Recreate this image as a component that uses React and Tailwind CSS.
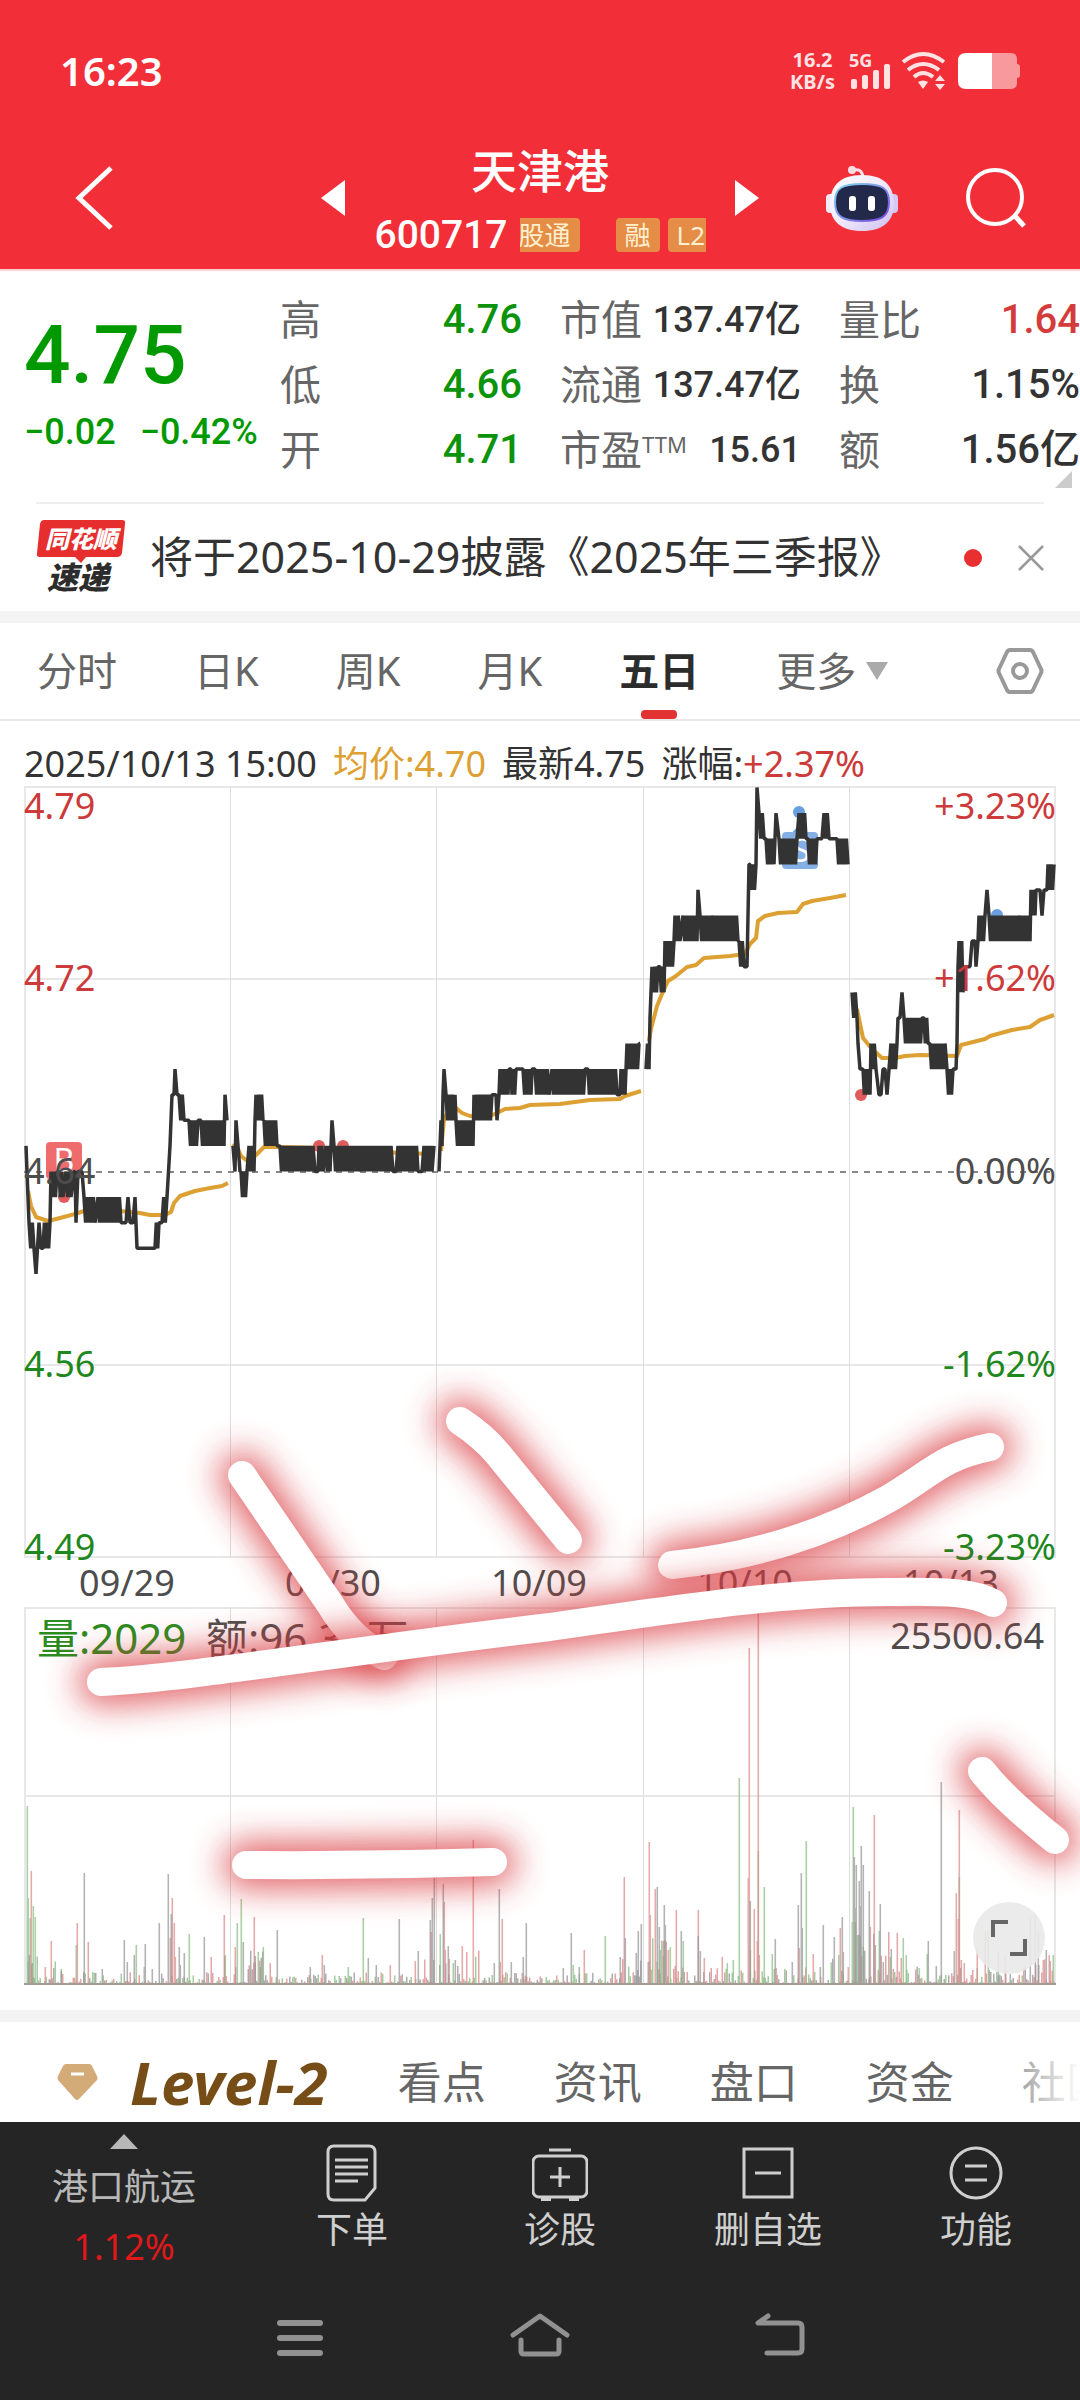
import React, { useState } from "react";

const sans = "font-['Noto_Sans','Noto_Sans_CJK_SC',sans-serif]";
const digits = "font-['Roboto','Noto_Sans_CJK_SC',sans-serif]";

const quotes = [
  [
    { label: "高", value: "4.76", color: "text-[#0c930c]" },
    { label: "低", value: "4.66", color: "text-[#0c930c]" },
    { label: "开", value: "4.71", color: "text-[#0c930c]" },
  ],
  [
    { label: "市值", value: "137.47亿", color: "text-[#333333]" },
    { label: "流通", value: "137.47亿", color: "text-[#333333]" },
    { label: "市盈", sup: "TTM", value: "15.61", color: "text-[#333333]" },
  ],
  [
    { label: "量比", value: "1.64", color: "text-[#d43c3c]" },
    { label: "换", value: "1.15%", color: "text-[#333333]" },
    { label: "额", value: "1.56亿", color: "text-[#333333]" },
  ],
];

const periods = ["分时", "日K", "周K", "月K", "五日"];
const infoTabs = ["看点", "资讯", "盘口", "资金", "社区"];

// One entry per run: [x start, x end, level a, level b], one level is 0.01
const days = [
  [
    [26, 28, 1, -1], [29, 34, -2, -3], [36, 36, -4, -4], [39, 41, -2, -3], [43, 50, -3, -2],
    [51, 57, 0, -1], [59, 63, 0, -1], [66, 71, 0, -1], [74, 75, 0, 0], [76, 76, -2, -2], [78, 82, 0, 0],
    [84, 95, -1, -2], [98, 108, -1, -2], [110, 121, -1, -2], [122, 126, -2, -2], [128, 128, -1, -1],
    [130, 133, -2, -2], [135, 135, -1, -1], [137, 154, -3, -3], [155, 159, -3, -2],
    [162, 167, -2, -1], [170, 170, 1, 1], [172, 174, 3, 3], [175, 175, 4, 4], [177, 178, 3, 3],
    [179, 184, 3, 2], [186, 188, 2, 2], [189, 198, 2, 1], [201, 224, 2, 1], [225, 225, 3, 3], [227, 227, 2, 2],
  ],
  [
    [233, 235, 1, 0], [236, 236, 2, 2], [238, 240, 1, 0], [241, 247, 0, -1], [249, 254, 1, 0],
    [255, 255, 2, 2], [256, 263, 3, 2], [264, 277, 2, 1], [280, 308, 1, 0], [310, 313, 1, 0],
    [315, 318, 0, 0], [319, 323, 1, 0], [326, 330, 1, 0], [332, 332, 2, 2], [334, 359, 1, 0],
    [361, 391, 1, 0], [393, 396, 0, 0], [398, 418, 1, 0], [419, 422, 0, 0], [424, 432, 1, 0], [434, 434, 1, 1],
  ],
  [
    [439, 441, 0, 2], [442, 443, 1, 3], [444, 444, 4, 4], [446, 455, 3, 2], [456, 473, 2, 1],
    [474, 492, 3, 2], [493, 496, 3, 3], [497, 499, 2, 3], [500, 508, 4, 3], [509, 511, 4, 4],
    [512, 516, 3, 4], [517, 522, 4, 4], [523, 531, 4, 3], [532, 534, 4, 4], [535, 549, 4, 3],
    [552, 562, 4, 3], [564, 585, 4, 3], [588, 598, 4, 3], [600, 617, 4, 3],
    [618, 620, 3, 3], [621, 625, 4, 3], [627, 639, 5, 4], [640, 640, 5, 5],
  ],
  [
    [646, 649, 4, 5], [650, 650, 6, 6], [652, 658, 8, 7], [660, 664, 8, 7], [665, 674, 9, 8],
    [675, 680, 10, 9], [683, 697, 10, 9], [698, 698, 11, 11], [700, 711, 10, 9], [713, 738, 10, 9],
    [739, 744, 9, 8], [745, 747, 8, 8],
    [749, 749, 12, 12], [750, 756, 12, 11], [757, 757, 15, 15], [759, 764, 14, 13], [766, 774, 13, 12],
    [776, 776, 14, 14], [779, 797, 13, 12], [799, 806, 14, 13], [808, 817, 13, 12], [818, 822, 13, 13],
    [824, 829, 14, 13], [831, 835, 13, 13], [837, 848, 13, 12],
  ],
  [
    [852, 857, 7, 6], [858, 858, 5, 5], [860, 861, 4, 4], [863, 870, 4, 3], [871, 876, 5, 4],
    [879, 881, 3, 3], [883, 885, 4, 4], [887, 889, 3, 4], [891, 897, 5, 4], [898, 900, 6, 6],
    [902, 902, 7, 7], [904, 922, 6, 5], [924, 928, 6, 5], [930, 945, 5, 4], [947, 953, 4, 3],
    [955, 956, 4, 4], [957, 958, 5, 8], [959, 963, 9, 7], [965, 970, 8, 8], [972, 975, 9, 9],
    [976, 978, 8, 9], [979, 985, 10, 9], [987, 987, 11, 11], [989, 1018, 10, 9], [1020, 1030, 10, 9],
    [1031, 1035, 11, 10],
    [1036, 1040, 11, 11], [1042, 1042, 10, 10], [1044, 1047, 11, 11], [1048, 1054, 12, 11],
  ],
];

const averages = [
  "28,1190 31,1205 36,1216 48,1220 60,1217 75,1213 84,1210 120,1210 140,1212 150,1214 165,1214 171,1211 174,1202 180,1195 195,1190 210,1187 222,1185 228,1182",
  "232,1144 238,1148 241,1155 246,1159 252,1158 258,1152 264,1146 280,1146 320,1147 360,1149 400,1152 434,1153",
  "441,1150 444,1118 450,1108 456,1107 462,1112 470,1115 490,1115 497,1112 505,1108 520,1107 530,1104 560,1103 590,1099 620,1098 625,1095 641,1090",
  "649,1040 651,1028 657,1005 662,993 668,980 676,975 687,966 696,964 704,957 730,955 745,953 750,943 756,937 758,920 765,915 778,912 797,911 803,903 812,900 830,897 846,894",
  "857,1008 863,1037 872,1048 882,1057 895,1057 905,1055 920,1054 957,1055 961,1044 985,1038 990,1035 1012,1029 1030,1026 1040,1019 1054,1014",
];

const volumes = {
  "#8fc08a": [
    [27, 179], [28, 87], [30, 67], [33, 79], [35, 68], [76, 40], [136, 40], [189, 51], [225, 30], [237, 62], [241, 86],
    [263, 38], [348, 18], [363, 67], [440, 51], [573, 20], [605, 49], [660, 35], [670, 38], [683, 44],
    [727, 22], [733, 25], [739, 207], [750, 35], [758, 134], [764, 98], [772, 31], [806, 144], [852, 63],
    [853, 178], [857, 50], [879, 54], [903, 47], [906, 30], [919, 17], [927, 31], [959, 108], [988, 54], [1053, 30],
  ],
  "#dc8f8f": [
    [31, 114], [45, 18], [51, 44], [77, 62], [88, 43], [170, 47], [172, 87], [174, 62], [175, 28], [224, 70], [235, 38], [254, 68],
    [322, 30], [390, 20], [415, 24], [431, 53], [444, 83], [445, 35], [449, 26], [462, 39], [473, 145], [500, 23], [502, 66],
    [584, 35], [624, 108], [649, 143], [650, 70], [655, 96], [663, 44], [668, 35], [676, 75], [698, 75],
    [704, 27], [722, 28], [748, 107], [749, 337], [754, 76], [757, 44], [758, 372], [759, 30], [776, 17],
    [799, 37], [813, 31], [840, 57], [848, 18], [855, 63], [870, 58], [874, 170], [897, 52], [901, 27],
    [956, 92], [958, 66], [959, 175], [961, 25], [964, 22], [977, 37], [985, 54], [1005, 28], [1043, 25], [1050, 24],
  ],
  "#9a9a9a": [
    [29, 30], [32, 22], [61, 14], [84, 112], [102, 16], [124, 45], [127, 23], [134, 30], [145, 41], [144, 18], [152, 16], [159, 62],
    [168, 111], [171, 71], [179, 38], [180, 20], [184, 32], [204, 48], [243, 43], [248, 16], [255, 29], [260, 18], [277, 55],
    [310, 18], [324, 20], [368, 27], [376, 20], [399, 66], [418, 34], [430, 65], [432, 87], [434, 107],
    [443, 101], [448, 39], [455, 25], [494, 22], [499, 96], [511, 23], [523, 28], [526, 62], [563, 17],
    [571, 52], [579, 18], [620, 28], [625, 47], [636, 32], [638, 54], [641, 61], [657, 98], [659, 58], [664, 80],
    [665, 60], [681, 54], [698, 49], [700, 34], [750, 84], [775, 46], [792, 23], [798, 80], [801, 112],
    [802, 57], [820, 18], [823, 60], [834, 48], [842, 68], [843, 33], [854, 128], [855, 77], [856, 120],
    [859, 104], [860, 79], [861, 139], [863, 120], [869, 94], [875, 40], [880, 81], [883, 23], [891, 36],
    [928, 44], [936, 19], [941, 203], [954, 34], [998, 33], [1030, 68], [1035, 70], [1038, 54], [1046, 35],
  ],
};

const strokes = [
  "M242 1474 L330 1603 Q352 1640 384 1655",
  "M460 1420 Q484 1436 497 1452 T568 1539",
  "M672 1564 Q790 1552 888 1498 C930 1474 940 1456 990 1446",
  "M101 1681 C190 1677 330 1652 550 1626 C700 1604 800 1590 895 1591 C950 1590 975 1592 993 1602",
  "M246 1864 Q370 1865 493 1861",
  "M982 1770 Q1004 1798 1055 1839",
];

const levelY = (level) => 1170.5 - level * 25.6;

const pricePath = (runs) => {
  const points = [];
  runs.forEach(([x0, x1, a, b]) => {
    const steps = Math.max(1, Math.round((x1 - x0) / 1.5));
    for (let i = 0; i <= steps; i++) {
      const x = x0 + ((x1 - x0) * i) / steps;
      points.push(`${x.toFixed(1)} ${levelY(i % 2 ? b : a).toFixed(1)}`);
    }
  });
  return "M" + points.join("L");
};

// Low background volume, higher after each open
const smallVolumes = () => {
  const colors = Object.keys(volumes);
  const opens = [26, 232, 439, 646, 852];
  const bars = [];
  let seed = 17;
  const next = () => {
    seed = (seed * 16807) % 2147483647;
    return seed / 2147483647;
  };
  opens.forEach((open, day) => {
    for (let x = open; x < open + 202; x += 1.5) {
      const t = (x - open) / 202;
      const boost = (t < 0.2 ? 22 : 7) * (day > 2 ? 1.5 : 1) + (t > 0.9 ? 10 : 0);
      const height = 2 + Math.pow(next(), 3) * boost * 1.6;
      bars.push([x, height, colors[Math.floor(next() * 3)]]);
    }
  });
  return bars;
};

const StatusBar = () => (
  <div className="flex h-[142px] items-center justify-between pl-[60px] pr-[59px] text-white">
    <span className="text-[40px] font-semibold">16:23</span>
    <div className="flex items-center gap-[10px]">
      <div className="mr-1 text-center text-[20px] font-bold leading-[22px] text-[#ffe3e4]">
        <p>16.2</p>
        <p>KB/s</p>
      </div>
      <svg width="42" height="44" viewBox="0 0 42 44" fill="#ffe3e4">
        <text x="0" y="18" fontSize="18" fontWeight="700">5G</text>
        <rect x="2" y="30" width="6" height="10" rx="2" />
        <rect x="13" y="26" width="6" height="14" rx="2" />
        <rect x="24" y="21" width="6" height="19" rx="2" />
        <rect x="35" y="15" width="6" height="25" rx="2" />
      </svg>
      <svg width="46" height="40" viewBox="0 0 46 40" fill="none" stroke="#ffe3e4" strokeWidth="4">
        <path d="M2 11 Q22 -5 43 11" />
        <path d="M7 19 Q22 7 38 19" />
        <path d="M13 26 Q22 18 32 26" />
        <path d="M17 31 Q22 28 27 31 L22 38Z" fill="#ffe3e4" stroke="none" />
        <path d="M34 30 L39 24 L44 30Z M34 33 H44 L39 39Z" fill="#ffe3e4" stroke="none" />
      </svg>
      <svg width="64" height="38" viewBox="0 0 64 38">
        <path d="M35 1 H54 Q60 1 60 7 V12 Q63 12 63 15 V23 Q63 26 60 26 V31 Q60 37 53 37 H35Z" fill="#f8999d" />
        <path d="M35 1 H9 Q1 1 1 9 V29 Q1 37 9 37 H35Z" fill="#fff" />
      </svg>
    </div>
  </div>
);

const Robot = () => (
  <svg width="72" height="68" viewBox="0 0 72 68">
    <defs>
      <linearGradient id="head" x1="0" y1="0" x2="1" y2="1">
        <stop offset="0" stopColor="#ffffff" />
        <stop offset="0.5" stopColor="#f0e9fb" />
        <stop offset="1" stopColor="#cdbdf0" />
      </linearGradient>
      <linearGradient id="rim" x1="0" y1="0" x2="1" y2="1">
        <stop offset="0" stopColor="#7fd9ef" />
        <stop offset="1" stopColor="#7a45e0" />
      </linearGradient>
    </defs>
    <path d="M27 6 Q36 4 37 13" fill="none" stroke="#fbdfe6" strokeWidth="3" />
    <circle cx="26" cy="6" r="4" fill="#fbdfe6" />
    <rect x="0" y="30" width="9" height="19" rx="4" fill="#f1eaf8" />
    <rect x="63" y="30" width="9" height="19" rx="4" fill="#d5c8f2" />
    <path d="M36 11 C58 11 68 22 68 40 C68 57 57 67 36 67 C15 67 4 57 4 40 C4 22 14 11 36 11Z" fill="url(#head)" />
    <path d="M36 20 C56 20 63 24 63 38 C63 53 55 57 36 57 C17 57 9 53 9 38 C9 24 16 20 36 20Z" fill="#22294a" stroke="url(#rim)" strokeWidth="2" />
    <rect x="23" y="32" width="7" height="15" rx="3" fill="#fff" />
    <rect x="42" y="32" width="7" height="15" rx="3" fill="#fff" />
  </svg>
);

const Header = () => (
  <header className="border-b-2 border-[#fbd3d6] bg-[#f22f38] text-white">
    <StatusBar />
    <div className="grid h-[127px] grid-cols-[1fr_438px_1fr] items-center pb-4">
      <button aria-label="返回" className="justify-self-start pl-[74px]">
        <svg width="40" height="64" viewBox="0 0 40 64" fill="none" stroke="#fff" strokeWidth="5">
          <path d="M37 2 L5 32 L37 62" />
        </svg>
      </button>
      <div className="flex items-center justify-between">
        <button aria-label="上一只">
          <svg width="24" height="36" viewBox="0 0 24 36" fill="#fff"><path d="M24 0 V36 L0 18Z" /></svg>
        </button>
        <div className="-mb-5 -mt-3 flex flex-col items-center">
          <h1 className="text-[46px] font-medium leading-[66px]">天津港</h1>
          <div className="flex items-center gap-3">
            <span className={`${digits} text-[39px] font-medium leading-[64px]`}>600717</span>
            <div className="flex w-[186px] overflow-hidden whitespace-nowrap text-[26px] leading-[34px] text-[#fdf0cf]">
              <span className="-ml-9 mr-9 shrink-0 rounded-sm bg-[#e58c46] px-[9px]">沪股通</span>
              <span className="mr-2 shrink-0 rounded-sm bg-[#e58c46] px-[9px]">融</span>
              <span className="shrink-0 rounded-sm bg-[#e58c46] px-[9px]">L2</span>
            </div>
          </div>
        </div>
        <button aria-label="下一只">
          <svg width="24" height="36" viewBox="0 0 24 36" fill="#fff"><path d="M0 0 V36 L24 18Z" /></svg>
        </button>
      </div>
      <div className="flex items-center justify-end gap-[68px] pr-[54px]">
        <button aria-label="智能助手"><Robot /></button>
        <button aria-label="搜索">
          <svg width="60" height="60" viewBox="0 0 60 60" fill="none" stroke="#fff" strokeWidth="4">
            <circle cx="29" cy="29" r="27" />
            <path d="M48 47 L58 58" strokeWidth="5" />
          </svg>
        </button>
      </div>
    </div>
  </header>
);

const Quote = () => (
  <section className="relative grid grid-cols-[280fr_280fr_279fr_241fr] pb-5 pt-4">
    <div className={`${digits} pl-6 font-medium text-[#009900]`}>
      <p className="pt-4 text-[82px] leading-[104px]">4.75</p>
      <p className="flex gap-6 whitespace-nowrap text-[36px] leading-[50px]">
        <span>−0.02</span>
        <span>−0.42%</span>
      </p>
    </div>
    {quotes.map((column, index) => (
      <dl key={index} className={index < 2 ? "pr-[38px]" : ""}>
        {column.map((item) => (
          <div key={item.label} className="flex h-[65px] items-center justify-between whitespace-nowrap">
            <dt className="text-[41px] text-[#666666]">
              {item.label}
              {item.sup && <sup className="-top-3 text-[22px]">{item.sup}</sup>}
            </dt>
            <dd className={`${digits} ${item.color} ${index === 1 ? "text-[36px]" : "text-[40px]"} font-medium`}>
              {item.value}
            </dd>
          </div>
        ))}
      </dl>
    ))}
    <svg className="absolute bottom-[14px] right-2" width="17" height="17" viewBox="0 0 17 17" fill="#cccccc">
      <path d="M17 0 V17 H0Z" />
    </svg>
  </section>
);

const Notice = () => {
  const [open, setOpen] = useState(true);
  if (!open) return null;

  return (
    <div className="mx-9 flex h-[109px] items-center border-t-2 border-[#eeeeee]">
      <svg width="90" height="80" viewBox="0 0 90 80" className="shrink-0 font-['Noto_Sans_CJK_SC',sans-serif]">
        <path d="M8 2 H86 Q90 2 89 6 L86 35 Q85 39 81 39 H50 L45 45 L39 39 H4 Q0 39 1 35 L4 6 Q5 2 8 2Z" fill="#e62e2e" />
        <text x="45" y="30" textAnchor="middle" fontSize="24" fontWeight="900" fontStyle="italic" fill="#fff">同花顺</text>
        <text x="42" y="71" textAnchor="middle" fontSize="31" fontWeight="900" fontStyle="italic" fill="#2c2c2c">速递</text>
      </svg>
      <a href="#notice" className="ml-6 flex-1 whitespace-nowrap text-[43px] text-[#333333]">
        将于2025-10-29披露《2025年三季报》
      </a>
      <span className="mr-9 size-[18px] rounded-full bg-[#e83030]" />
      <button aria-label="关闭" onClick={() => setOpen(false)}>
        <svg width="26" height="26" viewBox="0 0 26 26" stroke="#999" strokeWidth="2.5">
          <path d="M1 1 L25 25 M25 1 L1 25" />
        </svg>
      </button>
    </div>
  );
};

const PeriodTabs = () => {
  const [active, setActive] = useState("五日");

  return (
    <nav className="flex h-[98px] items-stretch gap-[77px] border-b-2 border-[#e8e8e8] pl-[37px] pr-9 text-[40px] text-[#666666]">
      {periods.map((period) => (
        <button
          key={period}
          onClick={() => setActive(period)}
          className={`relative whitespace-nowrap ${active === period ? "font-bold text-[#2c2c2c]" : ""}`}
        >
          {period}
          {active === period && (
            <span className="absolute bottom-0 left-1/2 h-[9px] w-9 -translate-x-1/2 rounded bg-[#e23232]" />
          )}
        </button>
      ))}
      <button className="flex items-center gap-[10px] whitespace-nowrap">
        更多
        <svg width="22" height="18" viewBox="0 0 22 18" fill="#aaaaaa"><path d="M0 0 H22 L11 18Z" /></svg>
      </button>
      <button aria-label="设置" className="ml-auto">
        <svg width="48" height="46" viewBox="0 0 48 46" fill="none" stroke="#999" strokeWidth="4">
          <path d="M14 2 H34 Q36 2 37 4 L45 21 Q46 23 45 25 L37 42 Q36 44 34 44 H14 Q12 44 11 42 L3 25 Q2 23 3 21 L11 4 Q12 2 14 2Z" />
          <circle cx="24" cy="23" r="7" />
        </svg>
      </button>
    </nav>
  );
};

const Chart = () => (
  <div className="relative">
    <svg viewBox="0 785 1080 1224" className="block w-full" fontSize="36">
      <defs>
        <filter id="glow" filterUnits="userSpaceOnUse" x="0" y="1300" width="1080" height="700">
          <feGaussianBlur stdDeviation="17" />
        </filter>
      </defs>

      {/* Grid */}
      <g fill="none" stroke="#e8e8e8" strokeWidth="2">
        <path d="M24 786 H1056 M24 978 H1056 M24 1364 H1056 M24 1556 H1056" />
        <path d="M24 1607 H1056 M24 1795 H1056" />
        <path d="M25 786 V1556 M1055 786 V1556 M25 1607 V1984 M1055 1607 V1984" />
      </g>
      <g fill="none" stroke="#dedede" strokeWidth="1">
        <path d="M230.5 786 V1556 M436.5 786 V1556 M643.5 786 V1556 M849.5 786 V1556" />
        <path d="M230.5 1607 V1984 M436.5 1607 V1984 M643.5 1607 V1984 M849.5 1607 V1984" />
      </g>
      <path d="M24 1171 H1056" stroke="#888" strokeWidth="2" strokeDasharray="6 6" />

      {/* Price */}
      <g fill="none" stroke="#dda032" strokeWidth="4" strokeLinejoin="round">
        {averages.map((points) => <polyline key={points} points={points} />)}
      </g>
      <g fill="#e05c5c">
        <rect x="46" y="1141" width="36" height="37" rx="4" fill="#ef6c6c" />
        <path d="M61 1170 H67 V1196 H61Z" />
        <circle cx="64" cy="1196" r="6" />
        <circle cx="319" cy="1145" r="6" />
        <circle cx="343" cy="1145" r="6" />
        <circle cx="861" cy="1094" r="6" />
      </g>
      <g fill="#699fdf">
        <path d="M790 834 L799 824 L808 834Z" />
        <rect x="782" y="831" width="36" height="37" rx="4" fill="#85b0e6" />
        <circle cx="799" cy="811" r="6" />
        <circle cx="997" cy="914" r="6" />
      </g>
      <text x="64" y="1171" textAnchor="middle" fontSize="32" fill="#fff">B</text>
      <text x="801" y="861" textAnchor="middle" fontSize="32" fill="#fff">S</text>
      <g fill="none" stroke="#333333" strokeWidth="3.5" strokeLinejoin="bevel">
        {days.map((runs, index) => <path key={index} d={pricePath(runs)} />)}
      </g>

      {/* Axis labels */}
      <g fill="#cc3a3a">
        <text x="24" y="818">4.79</text>
        <text x="24" y="990">4.72</text>
        <text x="1056" y="818" textAnchor="end">+3.23%</text>
        <text x="1056" y="990" textAnchor="end">+1.62%</text>
      </g>
      <g fill="#4d4d4d">
        <text x="24" y="1183">4.64</text>
        <text x="1056" y="1183" textAnchor="end">0.00%</text>
      </g>
      <g fill="#1e871e">
        <text x="24" y="1376">4.56</text>
        <text x="24" y="1559">4.49</text>
        <text x="1056" y="1376" textAnchor="end">-1.62%</text>
        <text x="1056" y="1559" textAnchor="end">-3.23%</text>
      </g>
      <g fill="#4d4d4d" textAnchor="middle">
        <text x="127" y="1595">09/29</text>
        <text x="333" y="1595">09/30</text>
        <text x="539" y="1595">10/09</text>
        <text x="745" y="1595">10/10</text>
        <text x="951" y="1595">10/13</text>
      </g>

      {/* Volume */}
      {smallVolumes().map(([x, height, color]) => (
        <rect key={x} x={x} y={1984 - height} width="1.5" height={height} fill={color} opacity="0.8" />
      ))}
      {Object.entries(volumes).map(([color, bars]) => (
        <g key={color} fill={color} opacity="0.75">
          {bars.map(([x, height]) => (
            <rect key={x + "-" + height} x={x - 0.5} y={1984 - height} width="1.6" height={height} />
          ))}
        </g>
      ))}
      <path d="M24 1983 H1056" stroke="#a39c94" strokeWidth="2" />
      <text x="37" y="1653" fontSize="42" fill="#2a8c1e">量:2029</text>
      <text x="206" y="1653" fontSize="42" fill="#4d4d4d">额:96.38万</text>
      <text x="1044" y="1648" textAnchor="end" fill="#4d4d4d">25500.64</text>

      {/* Brush marks */}
      {strokes.map((d) => (
        <g key={d} fill="none" strokeLinecap="round">
          <path d={d} stroke="#d93a40" strokeWidth="46" opacity="0.8" filter="url(#glow)" />
          <path d={d} stroke="#fff" strokeWidth="28" />
        </g>
      ))}
    </svg>
    <button
      aria-label="全屏"
      className="absolute bottom-9 right-[35px] flex size-[72px] items-center justify-center rounded-full bg-[#e9e9e9]/90"
    >
      <svg width="38" height="38" viewBox="0 0 38 38" fill="none" stroke="#666" strokeWidth="4">
        <path d="M3 18 V3 H18 M20 35 H35 V20" />
      </svg>
    </button>
  </div>
);

const InfoTabs = () => (
  <nav className="relative box-content flex h-[100px] items-center overflow-hidden whitespace-nowrap border-t-[12px] border-[#f4f4f4] pl-[57px] text-[44px] text-[#666666]">
    <svg width="41" height="36" viewBox="0 0 41 36" className="mt-5 shrink-0">
      <path d="M9 0 H32 Q34 0 35 2 L40 12 Q41 14 40 16 L22 35 Q20 37 18 35 L1 16 Q0 14 1 12 L6 2 Q7 0 9 0Z" fill="#d2ab78" />
      <path d="M14 10 H27" stroke="#fff" strokeWidth="3" />
    </svg>
    <a href="#level2" className="ml-8 mr-[70px] mt-5 text-[60px] font-bold italic leading-none text-[#764d17]">Level-2</a>
    <div className="mt-5 flex gap-[68px]">
      {infoTabs.map((tab) => <a key={tab} href={"#" + tab}>{tab}</a>)}
    </div>
    <div className="absolute inset-y-0 right-0 w-[100px] bg-gradient-to-r from-white/0 to-white" />
  </nav>
);

const actions = [
  {
    label: "下单",
    icon: (
      <>
        <path d="M10 4 H45 Q51 4 51 10 V46 L41 58 H10 Q4 58 4 52 V10 Q4 4 10 4Z" />
        <path d="M11 18 H44 M11 25 H44 M11 32 H44 M11 39 H34" />
      </>
    ),
  },
  {
    label: "诊股",
    icon: (
      <>
        <rect x="1" y="14" width="54" height="41" rx="6" />
        <path d="M17 8 H39 M18 35 H38 M28 25 V45" />
        <path d="M9 57 H19 M37 57 H47" strokeWidth="4" />
      </>
    ),
  },
  {
    label: "删自选",
    icon: <path d="M4 7 H52 V55 H4Z M15 31 H41" />,
  },
  {
    label: "功能",
    icon: (
      <>
        <circle cx="28" cy="31" r="25" />
        <path d="M17 24 H39 M17 38 H39" />
      </>
    ),
  },
];

const BottomBar = () => (
  <footer className="bg-[#252525] text-[#cfcfcf]">
    <div className="flex h-[164px] whitespace-nowrap text-[36px] leading-[44px]">
      <button className="flex flex-[248] flex-col items-center pt-3 text-[#b8b8b8]">
        <svg width="28" height="15" viewBox="0 0 28 15" fill="#b8b8b8"><path d="M0 15 L14 0 L28 15Z" /></svg>
        <span className="mt-4">港口航运</span>
        <span className="mt-4 text-[#e0181b]">1.12%</span>
      </button>
      {actions.map((action) => (
        <button key={action.label} className="flex flex-[208] flex-col items-center pt-5">
          <svg width="56" height="62" viewBox="0 0 56 62" fill="none" stroke="#cfcfcf" strokeWidth="3">
            {action.icon}
          </svg>
          <span className="mt-1">{action.label}</span>
        </button>
      ))}
    </div>
    <div className="flex h-[115px] justify-center gap-[180px] pt-[22px]">
      <button aria-label="菜单" className="self-start">
        <svg width="60" height="60" viewBox="0 0 60 60" stroke="#919191" strokeWidth="6" strokeLinecap="round">
          <path d="M10 15 H50 M10 30 H50 M10 45 H50" />
        </svg>
      </button>
      <button aria-label="主页" className="self-start">
        <svg width="60" height="60" viewBox="0 0 60 60" fill="none" stroke="#919191" strokeWidth="5" strokeLinecap="round" strokeLinejoin="round">
          <path d="M3 27 L30 8 L57 27 M11 32 V43 Q11 46 14 46 H46 Q49 46 49 43 V32" />
        </svg>
      </button>
      <button aria-label="后退" className="self-start">
        <svg width="60" height="60" viewBox="0 0 60 60" fill="none" stroke="#919191" strokeWidth="5" strokeLinecap="round" strokeLinejoin="round">
          <path d="M18 8 L8 15 H48 Q52 15 52 19 V41 Q52 45 48 45 H17" />
        </svg>
      </button>
    </div>
  </footer>
);

const App = () => {
  return (
    <div className={`${sans} min-h-screen w-full overflow-hidden bg-white`}>
      <Header />
      <Quote />
      <Notice />
      <div className="h-3 bg-[#f4f4f4]" />
      <PeriodTabs />
      <p className="flex h-[65px] items-center gap-4 whitespace-nowrap pl-6 pt-5 text-[36px] text-[#333333]">
        <span>2025/10/13 15:00</span>
        <span className="text-[#dda032]">均价:4.70</span>
        <span>最新4.75</span>
        <span>
          涨幅:<span className="text-[#cc3a3a]">+2.37%</span>
        </span>
      </p>
      <Chart />
      <InfoTabs />
      <BottomBar />
    </div>
  );
};

export default App;
